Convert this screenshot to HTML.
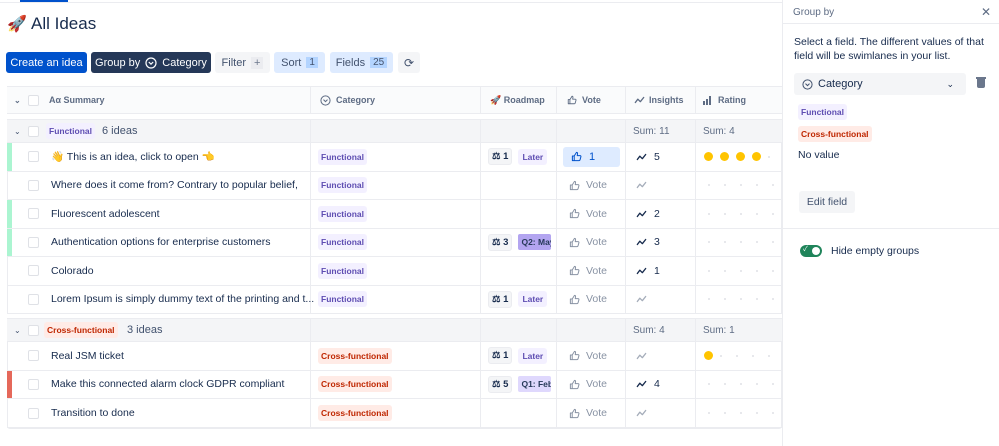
<!DOCTYPE html>
<html><head><meta charset="utf-8"><style>
*{box-sizing:border-box;margin:0;padding:0}
body{width:999px;height:446px;overflow:hidden;background:#fff;font-family:"Liberation Sans","Noto Sans CJK JP",sans-serif;color:#172b4d;position:relative}
.abs{position:absolute}
.btn{position:absolute;top:52px;height:21px;border-radius:3px;font-size:11px;display:flex;align-items:center;justify-content:center;gap:5px}
.row{position:absolute;left:7px;width:775px;display:flex;border-bottom:1px solid #ebecf0;font-size:10.5px;align-items:stretch}
.c{border-right:1px solid #ebecf0;display:flex;align-items:center;position:relative}
.c1{width:304px}.c2{width:170px;padding-left:7px}.c3{width:76px;padding-left:7px;gap:6px}.c4{width:69px;padding-left:5px}.c5{width:70px;padding-left:10px;gap:7px}.c6{width:86px;padding-left:7px;border-right:none}
.cb{width:11px;height:11px;border:1px solid #dfe1e6;border-radius:2px;background:#fff;position:absolute;left:21px}
.tf{background:#f3f0ff;color:#5e4db2;font-size:8.5px;font-weight:bold;padding:3px 3px;border-radius:3px}
.tx{background:#ffebe6;color:#bf2600;font-size:8.5px;font-weight:bold;padding:3px 3px;border-radius:3px}
.hd{color:#5e6c84;font-size:9px;font-weight:bold;gap:5px}
.grp{background:#f4f5f7}
.sc{background:#f4f5f7;border:1px solid #ebecf0;border-radius:3px;padding:2px 3px;font-size:9.5px;font-weight:bold;display:flex;gap:3px;align-items:center}
.lat{background:#f3f0ff;color:#5e4db2;font-size:8.5px;font-weight:bold;padding:3px 4px;border-radius:3px}
.q{background:#b3a5f0;color:#253858;font-size:8.5px;font-weight:bold;padding:3px 3px;border-radius:2px;white-space:nowrap;overflow:hidden;width:33px}
.vote{color:#8993a4;font-size:10.5px;display:flex;gap:6px;align-items:center;padding-left:7px}
.dots{display:flex;gap:14px;align-items:center;padding-left:5px}
.dots i{width:2px;height:2px;background:#dfe1e6;border-radius:50%;display:block}
.dots b{width:9px;height:9px;background:#ffc400;border-radius:50%;display:block;margin-right:-7px}
.bar{position:absolute;left:0;top:0;bottom:0;width:5px}
.t{position:absolute;left:44px;white-space:nowrap}
</style></head><body>
<svg width="0" height="0" style="position:absolute"><defs>
<symbol id="th" viewBox="0 0 12 12"><path d="M1.5 5.5h2v5h-2zM3.5 5.5l2.5-4c1 0 1.3.7 1.1 1.6L6.8 5h3c.8 0 1.2.6 1 1.3l-1 3.5c-.2.5-.6.7-1 .7H3.5" fill="none" stroke="currentColor" stroke-width="1.1" stroke-linejoin="round"/></symbol>
<symbol id="tr" viewBox="0 0 12 12"><path d="M1 9l3-4 3 3 4-5" fill="none" stroke="currentColor" stroke-width="1.6" stroke-linejoin="round" stroke-linecap="round"/></symbol>
</defs></svg>
<div class="abs" style="left:0;top:2px;width:782px;height:1px;background:#ebecf0"></div>
<div class="abs" style="left:20px;top:0;width:48px;height:2px;background:#0052cc"></div>
<div class="abs" style="left:7px;top:14px;font-size:16px">🚀</div>
<div class="abs" style="left:31px;top:14px;font-size:17px;color:#172b4d">All Ideas</div>

<div class="btn" style="left:6px;width:81px;background:#0052cc;color:#fff">Create an idea</div>
<div class="btn" style="left:91px;width:120px;background:#253858;color:#fff">Group by <svg width="12" height="12" viewBox="0 0 12 12"><circle cx="6" cy="6" r="5" fill="none" stroke="#fff" stroke-width="1.2"/><path d="M3.8 5l2.2 2.2L8.2 5" fill="none" stroke="#fff" stroke-width="1.2"/></svg> Category</div>
<div class="btn" style="left:215px;width:55px;background:#f4f5f7;color:#42526e">Filter <span style="background:#ebecf0;padding:0 3px;color:#6b778c">+</span></div>
<div class="btn" style="left:274px;width:51px;background:#deebff;color:#42526e">Sort <span style="background:#b3d4ff;padding:0 3px;font-size:10px">1</span></div>
<div class="btn" style="left:330px;width:63px;background:#deebff;color:#42526e">Fields <span style="background:#b3d4ff;padding:0 3px;font-size:10px">25</span></div>
<div class="btn" style="left:398px;width:22px;background:#f4f5f7;color:#42526e;font-size:12px">⟳</div>

<div class="abs" style="left:7px;top:86px;width:775px;height:343px;border:1px solid #ebecf0;border-radius:3px"></div>
<div class="row" style="top:86px;height:28px;background:#fafbfc;border-top:1px solid #ebecf0">
<div class="c c1 hd"><span style="position:absolute;left:7px;font-size:8px">⌄</span><div class="cb" style="left:21px"></div><span style="position:absolute;left:42px">Aα&nbsp;Summary</span></div>
<div class="c c2 hd" style="padding-left:9px"><svg width="11" height="11" viewBox="0 0 12 12"><circle cx="6" cy="6" r="5" fill="none" stroke="#5e6c84" stroke-width="1.1"/><path d="M3.8 5l2.2 2.2L8.2 5" fill="none" stroke="#5e6c84" stroke-width="1.1"/></svg>Category</div>
<div class="c c3 hd" style="padding-left:9px">🚀 Roadmap</div>
<div class="c c4 hd" style="padding-left:10px;color:#5e6c84"><svg width="10" height="10"><use href="#th"/></svg>Vote</div>
<div class="c c5 hd" style="gap:4px;padding-left:8px"><svg width="11" height="10"><use href="#tr"/></svg>Insights</div>
<div class="c c6 hd"><svg width="10" height="10" viewBox="0 0 10 10"><rect x="0" y="6" width="2" height="4" fill="#5e6c84"/><rect x="3" y="4" width="2" height="6" fill="#5e6c84"/><rect x="6" y="1" width="2" height="9" fill="#5e6c84"/></svg>Rating</div>
</div>
<div class="abs" style="left:7px;top:114px;width:775px;height:5px;background:#fff"></div>
<div class="row grp" style="top:119px;height:24px;border-top:1px solid #ebecf0">
<div class="c c1"><span style="position:absolute;left:7px;font-size:8px;color:#42526e">⌄</span><div class="cb"></div><span class="tf" style="position:absolute;left:39px">Functional</span><span style="position:absolute;left:95px;color:#42526e;font-size:11px">6 ideas</span></div>
<div class="c c2"></div><div class="c c3"></div><div class="c c4"></div>
<div class="c c5" style="color:#5e6c84;font-size:10px;padding-left:7px">Sum: 11</div>
<div class="c c6" style="color:#5e6c84;font-size:10px">Sum: 4</div>
</div>

<div class="row" style="top:143px;height:28.5px">
<div class="c c1"><div class="bar" style="background:#abf5d1"></div><div class="cb"></div><span class="t">👋 This is an idea, click to open 👈</span></div>
<div class="c c2"><span class="tf">Functional</span></div>
<div class="c c3"><span class="sc">⚖ 1</span><span class="lat">Later</span></div>
<div class="c c4"><div style="background:#deebff;color:#0052cc;width:57px;height:20px;border-radius:3px;display:flex;align-items:center;gap:7px;padding-left:8px;font-size:11px;margin-left:1px"><svg width="11" height="11"><use href="#th"/></svg>1</div></div>
<div class="c c5"><svg width="11" height="10"><use href="#tr"/></svg>5</div>
<div class="c c6"><div class="dots" style="padding-left:1px"><b></b><b></b><b></b><b></b><i></i></div></div>
</div>
<div class="row" style="top:171.5px;height:28.5px">
<div class="c c1"><div class="cb"></div><span class="t">Where does it come from? Contrary to popular belief,</span></div>
<div class="c c2"><span class="tf">Functional</span></div><div class="c c3"></div>
<div class="c c4"><span class="vote"><svg width="11" height="11"><use href="#th"/></svg>Vote</span></div><div class="c c5" style="color:#a5adba"><svg width="11" height="10"><use href="#tr"/></svg></div>
<div class="c c6"><div class="dots"><i></i><i></i><i></i><i></i><i></i></div></div>
</div>
<div class="row" style="top:200px;height:28.5px">
<div class="c c1"><div class="bar" style="background:#abf5d1"></div><div class="cb"></div><span class="t">Fluorescent adolescent</span></div>
<div class="c c2"><span class="tf">Functional</span></div><div class="c c3"></div>
<div class="c c4"><span class="vote"><svg width="11" height="11"><use href="#th"/></svg>Vote</span></div><div class="c c5"><svg width="11" height="10"><use href="#tr"/></svg>2</div>
<div class="c c6"><div class="dots"><i></i><i></i><i></i><i></i><i></i></div></div>
</div>
<div class="row" style="top:228.5px;height:28.5px">
<div class="c c1"><div class="bar" style="background:#abf5d1"></div><div class="cb"></div><span class="t">Authentication options for enterprise customers</span></div>
<div class="c c2"><span class="tf">Functional</span></div>
<div class="c c3"><span class="sc">⚖ 3</span><span class="q">Q2: May</span></div>
<div class="c c4"><span class="vote"><svg width="11" height="11"><use href="#th"/></svg>Vote</span></div><div class="c c5"><svg width="11" height="10"><use href="#tr"/></svg>3</div>
<div class="c c6"><div class="dots"><i></i><i></i><i></i><i></i><i></i></div></div>
</div>
<div class="row" style="top:257px;height:28.5px">
<div class="c c1"><div class="cb"></div><span class="t">Colorado</span></div>
<div class="c c2"><span class="tf">Functional</span></div><div class="c c3"></div>
<div class="c c4"><span class="vote"><svg width="11" height="11"><use href="#th"/></svg>Vote</span></div><div class="c c5"><svg width="11" height="10"><use href="#tr"/></svg>1</div>
<div class="c c6"><div class="dots"><i></i><i></i><i></i><i></i><i></i></div></div>
</div>
<div class="row" style="top:285.5px;height:28.5px">
<div class="c c1"><div class="cb"></div><span class="t">Lorem Ipsum is simply dummy text of the printing and t...</span></div>
<div class="c c2"><span class="tf">Functional</span></div>
<div class="c c3"><span class="sc">⚖ 1</span><span class="lat">Later</span></div>
<div class="c c4"><span class="vote"><svg width="11" height="11"><use href="#th"/></svg>Vote</span></div><div class="c c5" style="color:#a5adba"><svg width="11" height="10"><use href="#tr"/></svg></div>
<div class="c c6"><div class="dots"><i></i><i></i><i></i><i></i><i></i></div></div>
</div>
<div class="abs" style="left:7px;top:314px;width:775px;height:4px;background:#fff"></div>
<div class="row grp" style="top:318px;height:24px;border-top:1px solid #ebecf0">
<div class="c c1"><span style="position:absolute;left:7px;font-size:8px;color:#42526e">⌄</span><div class="cb"></div><span class="tx" style="position:absolute;left:37px">Cross-functional</span><span style="position:absolute;left:120px;color:#42526e;font-size:11px">3 ideas</span></div>
<div class="c c2"></div><div class="c c3"></div><div class="c c4"></div>
<div class="c c5" style="color:#5e6c84;font-size:10px;padding-left:7px">Sum: 4</div>
<div class="c c6" style="color:#5e6c84;font-size:10px">Sum: 1</div>
</div>
<div class="row" style="top:342px;height:28.5px">
<div class="c c1"><div class="cb"></div><span class="t">Real JSM ticket</span></div>
<div class="c c2"><span class="tx">Cross-functional</span></div>
<div class="c c3"><span class="sc">⚖ 1</span><span class="lat">Later</span></div>
<div class="c c4"><span class="vote"><svg width="11" height="11"><use href="#th"/></svg>Vote</span></div><div class="c c5" style="color:#a5adba"><svg width="11" height="10"><use href="#tr"/></svg></div>
<div class="c c6"><div class="dots" style="padding-left:1px"><b></b><i></i><i></i><i></i><i></i></div></div>
</div>
<div class="row" style="top:370.5px;height:28.5px">
<div class="c c1"><div class="bar" style="background:#e5685a"></div><div class="cb"></div><span class="t">Make this connected alarm clock GDPR compliant</span></div>
<div class="c c2"><span class="tx">Cross-functional</span></div>
<div class="c c3"><span class="sc">⚖ 5</span><span class="q" style="background:#dfd8fd">Q1: Feb</span></div>
<div class="c c4"><span class="vote"><svg width="11" height="11"><use href="#th"/></svg>Vote</span></div><div class="c c5"><svg width="11" height="10"><use href="#tr"/></svg>4</div>
<div class="c c6"><div class="dots"><i></i><i></i><i></i><i></i><i></i></div></div>
</div>
<div class="row" style="top:399px;height:29px">
<div class="c c1"><div class="cb"></div><span class="t">Transition to done</span></div>
<div class="c c2"><span class="tx">Cross-functional</span></div><div class="c c3"></div>
<div class="c c4"><span class="vote"><svg width="11" height="11"><use href="#th"/></svg>Vote</span></div><div class="c c5" style="color:#a5adba"><svg width="11" height="10"><use href="#tr"/></svg></div>
<div class="c c6"><div class="dots"><i></i><i></i><i></i><i></i><i></i></div></div>
</div>

<div class="abs" style="left:782px;top:0;width:217px;height:446px;background:#fff;border-left:1px solid #ebecf0"></div>
<div class="abs" style="left:793px;top:7px;font-size:10px;color:#5e6c84">Group by</div>
<div class="abs" style="left:981px;top:5px;font-size:12px;color:#5e6c84">✕</div>
<div class="abs" style="left:783px;top:23px;width:216px;height:1px;background:#ebecf0"></div>
<div class="abs" style="left:794px;top:35px;width:195px;font-size:10.5px;line-height:14px;color:#172b4d">Select a field. The different values of that field will be swimlanes in your list.</div>
<div class="abs" style="left:794px;top:73px;width:172px;height:22px;background:#f4f5f7;border-radius:3px;display:flex;align-items:center;font-size:11px;gap:5px;padding-left:8px"><svg width="11" height="11" viewBox="0 0 12 12"><circle cx="6" cy="6" r="5" fill="none" stroke="#42526e" stroke-width="1.1"/><path d="M3.8 5l2.2 2.2L8.2 5" fill="none" stroke="#42526e" stroke-width="1.1"/></svg>Category<span style="position:absolute;right:12px;font-size:9px">⌄</span></div>
<div class="abs" style="left:977px;top:79px;width:8px;height:9px;background:#6b778c;border-radius:0 0 2px 2px"></div>
<div class="abs" style="left:976px;top:77px;width:10px;height:1.5px;background:#6b778c"></div>
<span class="abs tf" style="left:798px;top:104px">Functional</span>
<span class="abs tx" style="left:798px;top:126px">Cross-functional</span>
<div class="abs" style="left:798px;top:149px;font-size:10.5px">No value</div>
<div class="abs" style="left:799px;top:191px;width:56px;height:22px;background:#f4f5f7;border-radius:3px;font-size:10.5px;display:flex;align-items:center;justify-content:center;color:#42526e">Edit field</div>
<div class="abs" style="left:783px;top:228px;width:216px;height:1px;background:#ebecf0"></div>
<div class="abs" style="left:800px;top:245px;width:22px;height:12px;background:#1f845a;border-radius:6px"><div style="position:absolute;right:2px;top:2px;width:8px;height:8px;background:#fff;border-radius:50%"></div><span style="position:absolute;left:3px;top:-1px;color:#fff;font-size:7px">✓</span></div>
<div class="abs" style="left:831px;top:245px;font-size:10.5px;color:#172b4d">Hide empty groups</div>
</body></html>
